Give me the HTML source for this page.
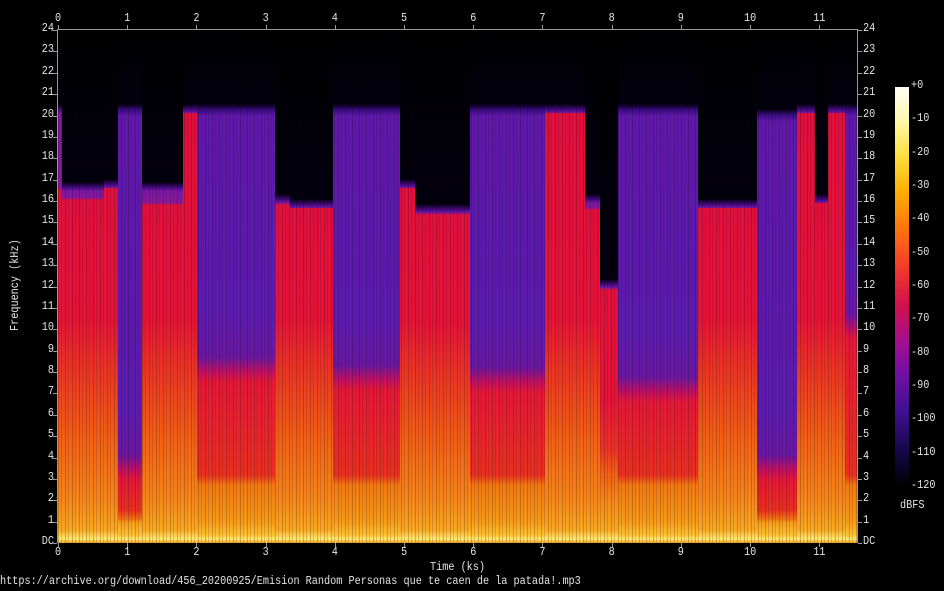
<!DOCTYPE html>
<html><head><meta charset="utf-8"><style>
body{margin:0;width:944px;height:591px;background:#000;overflow:hidden;position:relative;font-family:"Liberation Mono","DejaVu Sans Mono",monospace;font-size:10.2px;color:#e4e4e4}
.s{position:absolute;top:30px;height:513px}
.t{position:absolute;white-space:nowrap;line-height:12px;transform:scaleY(1.2)}
#plot{position:absolute;left:57px;top:29px;width:801px;height:514px;border:1px solid #999;border-width:1px 1px 0 1px;box-sizing:border-box}
#tex{position:absolute;left:58px;top:30px;width:800px;height:513px;background:repeating-linear-gradient(90deg,rgba(0,0,0,.2) 0 1px,rgba(255,255,255,0) 1px 3px,rgba(60,0,120,.15) 3px 4px,rgba(0,0,0,0) 4px 7px);mix-blend-mode:multiply}
#streak{position:absolute;left:58px;top:30px;width:800px;height:200px;background:repeating-linear-gradient(90deg,rgba(30,10,120,.0) 0 9px,rgba(40,20,140,.35) 9px 10px,rgba(0,0,0,0) 10px 23px,rgba(50,20,150,.25) 23px 25px,rgba(0,0,0,0) 25px 37px)}
#cb{position:absolute;left:895px;top:87px;width:14px;height:400px;background:linear-gradient(#fffff8 0%,#fff8b0 8%,#ffe040 17%,#ffb000 26%,#ff7010 36%,#f03030 47%,#d01050 55%,#a01090 64%,#7010a0 72%,#401090 81%,#180850 90%,#000 100%)}
</style></head><body>
<div id="spec"></div>
<div id="tex"></div>
<div id="plot"></div>
<div id="cb"></div>
<div id="lab"></div>
<div class="t" style="left:430px;top:563px">Time (ks)</div>
<div class="t" style="left:-28px;top:280px;transform:rotate(-90deg) scaleY(1.2);transform-origin:center;width:90px;text-align:center">Frequency (kHz)</div>
<div class="t" style="left:0;top:577px">https://archive.org/download/456_20200925/Emision Random Personas que te caen de la patada!.mp3</div>
<div class="t" style="left:900px;top:501px">dBFS</div>
<script>
var segs=[
[58,62,110,190,0],[62,104,188,200,0],[104,118,185,185,0],[118,142,110,470,1],[142,183,188,205,0],[183,197,110,112,0],[197,275,110,372,1],[275,290,200,205,0],[290,333,205,205,0],[333,400,110,380,1],[400,415,185,185,0],[415,470,210,215,0],[470,545,110,382,1],[545,558,110,110,0],[558,585,110,113,0],[585,600,200,210,0],[600,618,285,290,0],[618,698,110,392,1],[698,712,205,205,0],[712,757,205,205,0],[757,797,115,470,1],[797,815,110,113,0],[815,828,200,200,0],[828,845,110,110,0],[845,858,110,330,1]];
var h='';
segs.forEach(function(s){var c=s[2]-30,r=s[3]-30,q=s[4];
var g;
if(q){g='linear-gradient(#000 0,#03000e '+(c-6)+'px,#3a0c80 '+c+'px,#6018a8 '+(c+6)+'px,#5c1cae '+(r-60)+'px,#6a18a0 '+(r-15)+'px,#c01060 '+r+'px,#e41838 '+(r+10)+'px,#e83020 '+Math.max(r+40,445)+'px,#f07812 '+Math.max(r+50,455)+'px,#f59a18 492px,#fbc030 505px,#ffe870 509px,#f0a020 513px)';}
else{var o=Math.max(r+110,290);g='linear-gradient(#000 0,#03000e '+(c-6)+'px,#4a0c88 '+c+'px,#7a18a0 '+(c+3)+'px,#8a1898 '+Math.max(r-2,c+3)+'px,#e0103c '+r+'px,#e41438 '+o+'px,#ea3424 '+(o+50)+'px,#f05a16 '+Math.min(o+110,440)+'px,#f5861a 470px,#f8a820 500px,#ffe870 509px,#f0a020 513px)';}
h+='<div class="s" style="left:'+s[0]+'px;width:'+(s[1]-s[0])+'px;background:'+g+'"></div>';});
document.getElementById('spec').innerHTML=h;
var L='';
for(var k=0;k<=24;k++){var y=543-k*21.375;var t=k?k:'DC';
L+='<div class="t" style="right:'+(944-54)+'px;top:'+(y-6)+'px">'+t+'</div>';
L+='<div class="t" style="left:863px;top:'+(y-6)+'px">'+t+'</div>';
L+='<div style="position:absolute;left:53px;top:'+Math.round(y)+'px;width:4px;height:1px;background:#999"></div>';
L+='<div style="position:absolute;left:858px;top:'+Math.round(y)+'px;width:4px;height:1px;background:#999"></div>';}
for(var k=0;k<=11;k++){var x=58+k*69.2;
L+='<div class="t" style="left:'+(x-(k>9?6:3))+'px;top:14px">'+k+'</div>';
L+='<div class="t" style="left:'+(x-(k>9?6:3))+'px;top:548px">'+k+'</div>';
L+='<div style="position:absolute;left:'+Math.round(x)+'px;top:25px;width:1px;height:4px;background:#999"></div>';
L+='<div style="position:absolute;left:'+Math.round(x)+'px;top:543px;width:1px;height:4px;background:#999"></div>';}
for(var k=0;k<=12;k++){var y=87+k*33.33;var t=k?'-'+k*10:'+0';
L+='<div class="t" style="left:911px;top:'+(y-6)+'px">'+t+'</div>';}
document.getElementById('lab').innerHTML=L;
</script>
</body></html>
